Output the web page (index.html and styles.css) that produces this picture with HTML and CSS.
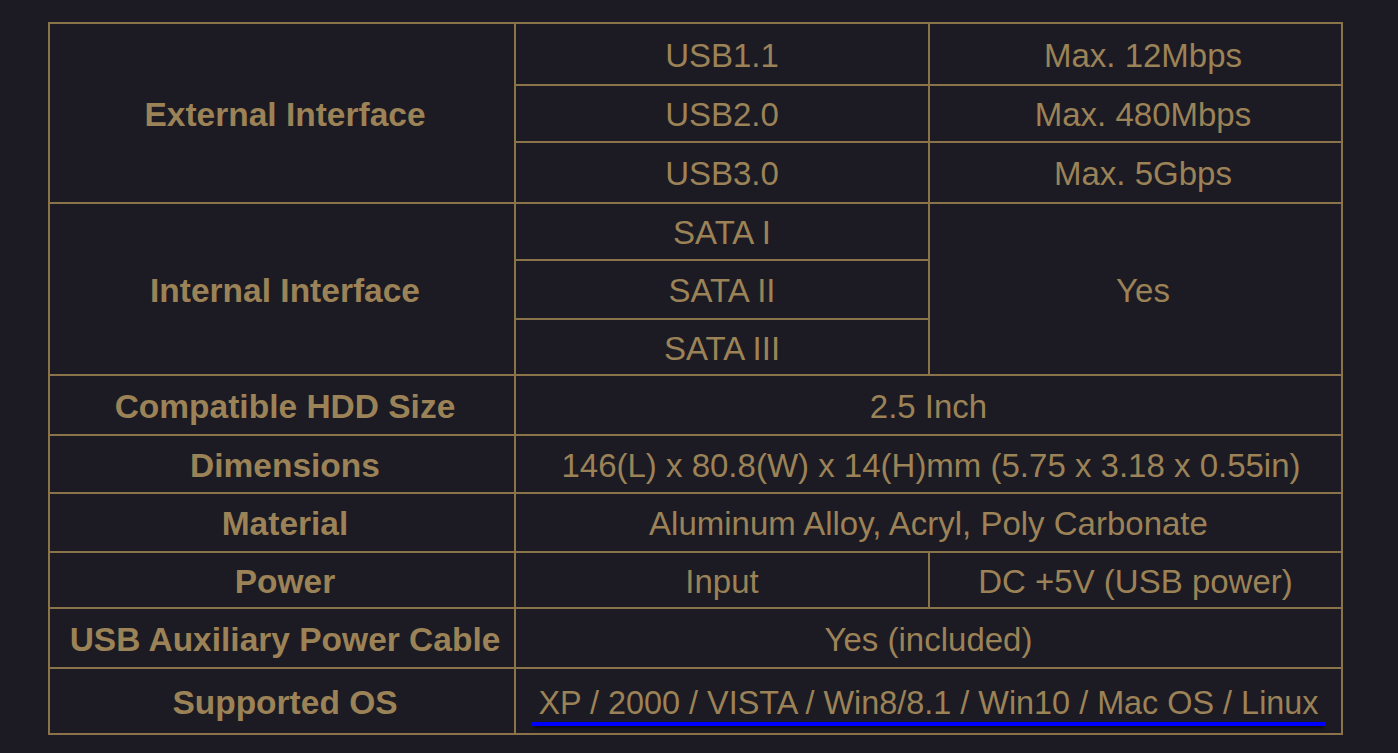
FILE: index.html
```html
<!DOCTYPE html>
<html lang="en">
<head>
<meta charset="utf-8">
<title>Specifications</title>
<link rel="stylesheet" href="styles.css">
</head>
<body>
<div class="spec">
  <div class="cell label r1-3">External Interface</div>
  <div class="cell">USB1.1</div>
  <div class="cell shift">Max. 12Mbps</div>
  <div class="cell">USB2.0</div>
  <div class="cell shift">Max. 480Mbps</div>
  <div class="cell">USB3.0</div>
  <div class="cell shift">Max. 5Gbps</div>

  <div class="cell label r4-6">Internal Interface</div>
  <div class="cell">SATA I</div>
  <div class="cell r4-6c shift">Yes</div>
  <div class="cell">SATA II</div>
  <div class="cell">SATA III</div>

  <div class="cell label">Compatible HDD Size</div>
  <div class="cell span2">2.5 Inch</div>

  <div class="cell label">Dimensions</div>
  <div class="cell span2 nudge">146(L) x 80.8(W) x 14(H)mm (5.75 x 3.18 x 0.55in)</div>

  <div class="cell label">Material</div>
  <div class="cell span2">Aluminum Alloy, Acryl, Poly Carbonate</div>

  <div class="cell label">Power</div>
  <div class="cell">Input</div>
  <div class="cell">DC +5V (USB power)</div>

  <div class="cell label">USB Auxiliary Power Cable</div>
  <div class="cell span2">Yes (included)</div>

  <div class="cell label">Supported OS</div>
  <div class="cell span2 os-cell"><span class="os">XP / 2000 / VISTA / Win8/8.1 / Win10 / Mac OS / Linux</span></div>
</div>
</body>
</html>
```

FILE: styles.css
```css
html, body {
  margin: 0;
  padding: 0;
  background: #1c1b23;
}

body {
  padding: 22px 0 0 48px;
  font-family: "Liberation Sans", Arial, Helvetica, sans-serif;
}

.spec {
  display: grid;
  width: 1295px;
  box-sizing: border-box;
  grid-template-columns: 464px 412px 411px;
  grid-template-rows: 60px 55px 59px 55px 57px 54px 58px 56px 57px 54px 58px 64px;
  gap: 2px;
  padding: 2px;
  background: #8a7249;
}

.cell {
  background: #1c1b23;
  color: #9b8257;
  font-size: 33px;
  display: flex;
  align-items: center;
  justify-content: center;
  padding-top: 3px;
  box-sizing: border-box;
  white-space: nowrap;
}

.label {
  font-weight: bold;
  font-size: 33.5px;
  grid-column: 1;
  padding-left: 6px;
}

.shift {
  padding-left: 15px;
}

.nudge {
  padding-left: 5px;
}

.r1-3 {
  grid-row: 1 / span 3;
}

.r4-6 {
  grid-row: 4 / span 3;
}

.r4-6c {
  grid-row: 4 / span 3;
  grid-column: 3;
}

.span2 {
  grid-column: 2 / span 2;
}

.os-cell {
  padding-top: 8px;
}

.os {
  display: inline-block;
  padding: 0 7px;
  font-size: 32.4px;
  border-bottom: 4px solid #0000ff;
  box-shadow: 0 5px 3px -3px rgba(0, 0, 0, 0.6);
  line-height: normal;
}
```
